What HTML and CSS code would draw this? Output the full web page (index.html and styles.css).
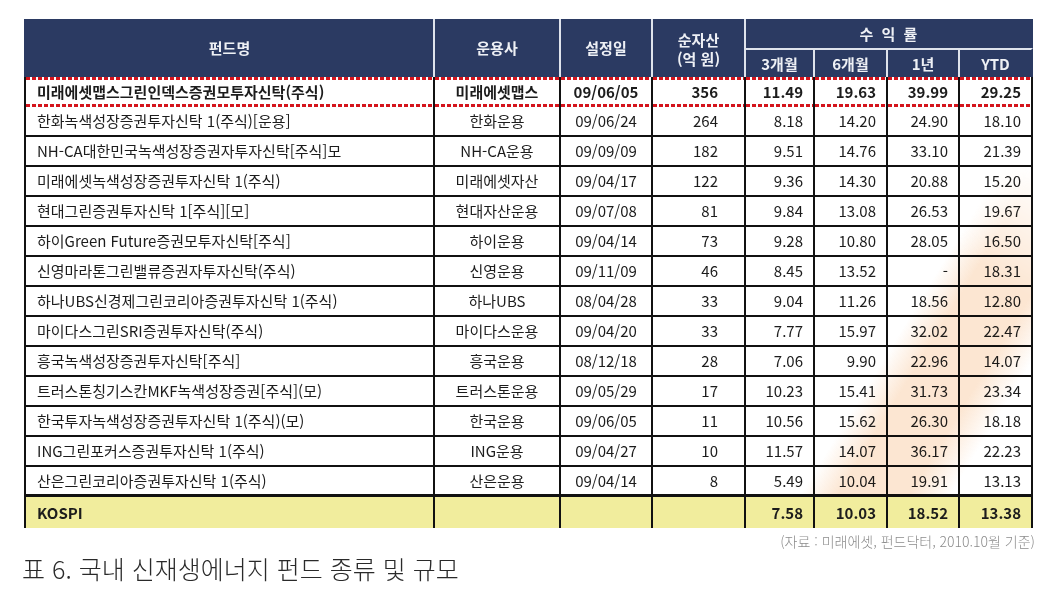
FILE: index.html
```html
<!DOCTYPE html>
<html lang="ko">
<head>
<meta charset="utf-8">
<title>국내 신재생에너지 펀드 종류 및 규모</title>
<link rel="stylesheet" href="styles.css">
</head>
<body>
<div class="page">
  <div class="table-wrap">
    <table class="fund">
      <colgroup>
        <col class="c-name"><col class="c-mgr"><col class="c-date"><col class="c-asset">
        <col class="c-r1"><col class="c-r2"><col class="c-r3"><col class="c-r4">
      </colgroup>
      <thead>
        <tr class="h1">
          <th rowspan="2" class="first">펀드명</th>
          <th rowspan="2">운용사</th>
          <th rowspan="2">설정일</th>
          <th rowspan="2" class="two">순자산<br>(억 원)</th>
          <th colspan="4" class="grp last">수 익 률</th>
        </tr>
        <tr class="h2">
          <th>3개월</th><th>6개월</th><th>1년</th><th class="last">YTD</th>
        </tr>
      </thead>
      <tbody>
        <tr class="hl">
          <td class="name">미래에셋맵스그린인덱스증권모투자신탁(주식)</td><td class="ctr">미래에셋맵스</td><td class="ctr">09/06/05</td><td class="amt">356</td><td class="num">11.49</td><td class="num">19.63</td><td class="num">39.99</td><td class="num">29.25</td>
        </tr>
        <tr>
          <td class="name">한화녹색성장증권투자신탁 1(주식)[운용]</td><td class="ctr">한화운용</td><td class="ctr">09/06/24</td><td class="amt">264</td><td class="num">8.18</td><td class="num">14.20</td><td class="num">24.90</td><td class="num">18.10</td>
        </tr>
        <tr>
          <td class="name">NH-CA대한민국녹색성장증권자투자신탁[주식]모</td><td class="ctr">NH-CA운용</td><td class="ctr">09/09/09</td><td class="amt">182</td><td class="num">9.51</td><td class="num">14.76</td><td class="num">33.10</td><td class="num">21.39</td>
        </tr>
        <tr>
          <td class="name">미래에셋녹색성장증권투자신탁 1(주식)</td><td class="ctr">미래에셋자산</td><td class="ctr">09/04/17</td><td class="amt">122</td><td class="num">9.36</td><td class="num">14.30</td><td class="num">20.88</td><td class="num">15.20</td>
        </tr>
        <tr>
          <td class="name">현대그린증권투자신탁 1[주식][모]</td><td class="ctr">현대자산운용</td><td class="ctr">09/07/08</td><td class="amt">81</td><td class="num">9.84</td><td class="num">13.08</td><td class="num">26.53</td><td class="num">19.67</td>
        </tr>
        <tr>
          <td class="name">하이Green Future증권모투자신탁[주식]</td><td class="ctr">하이운용</td><td class="ctr">09/04/14</td><td class="amt">73</td><td class="num">9.28</td><td class="num">10.80</td><td class="num">28.05</td><td class="num">16.50</td>
        </tr>
        <tr>
          <td class="name">신영마라톤그린밸류증권자투자신탁(주식)</td><td class="ctr">신영운용</td><td class="ctr">09/11/09</td><td class="amt">46</td><td class="num">8.45</td><td class="num">13.52</td><td class="num">-</td><td class="num">18.31</td>
        </tr>
        <tr>
          <td class="name">하나UBS신경제그린코리아증권투자신탁 1(주식)</td><td class="ctr">하나UBS</td><td class="ctr">08/04/28</td><td class="amt">33</td><td class="num">9.04</td><td class="num">11.26</td><td class="num">18.56</td><td class="num">12.80</td>
        </tr>
        <tr>
          <td class="name">마이다스그린SRI증권투자신탁(주식)</td><td class="ctr">마이다스운용</td><td class="ctr">09/04/20</td><td class="amt">33</td><td class="num">7.77</td><td class="num">15.97</td><td class="num">32.02</td><td class="num">22.47</td>
        </tr>
        <tr>
          <td class="name">흥국녹색성장증권투자신탁[주식]</td><td class="ctr">흥국운용</td><td class="ctr">08/12/18</td><td class="amt">28</td><td class="num">7.06</td><td class="num">9.90</td><td class="num">22.96</td><td class="num">14.07</td>
        </tr>
        <tr>
          <td class="name">트러스톤칭기스칸MKF녹색성장증권[주식](모)</td><td class="ctr">트러스톤운용</td><td class="ctr">09/05/29</td><td class="amt">17</td><td class="num">10.23</td><td class="num">15.41</td><td class="num">31.73</td><td class="num">23.34</td>
        </tr>
        <tr>
          <td class="name">한국투자녹색성장증권투자신탁 1(주식)(모)</td><td class="ctr">한국운용</td><td class="ctr">09/06/05</td><td class="amt">11</td><td class="num">10.56</td><td class="num">15.62</td><td class="num">26.30</td><td class="num">18.18</td>
        </tr>
        <tr>
          <td class="name">ING그린포커스증권투자신탁 1(주식)</td><td class="ctr">ING운용</td><td class="ctr">09/04/27</td><td class="amt">10</td><td class="num">11.57</td><td class="num">14.07</td><td class="num">36.17</td><td class="num">22.23</td>
        </tr>
        <tr class="lastrow">
          <td class="name">산은그린코리아증권투자신탁 1(주식)</td><td class="ctr">산은운용</td><td class="ctr">09/04/14</td><td class="amt">8</td><td class="num">5.49</td><td class="num">10.04</td><td class="num">19.91</td><td class="num">13.13</td>
        </tr>
        <tr class="kospi">
          <td class="name">KOSPI</td><td></td><td></td><td></td><td class="num">7.58</td><td class="num">10.03</td><td class="num">18.52</td><td class="num">13.38</td>
        </tr>
      </tbody>
    </table>
    <div class="watermark"><div class="band"></div></div>
  </div>
  <p class="source">(자료 : 미래에셋, 펀드닥터, 2010.10월 기준)</p>
  <h1 class="title">표 6. 국내 신재생에너지 펀드 종류 및 규모</h1>
</div>
</body>
</html>
```

FILE: styles.css
```css
* { box-sizing: border-box; }
html, body {
  margin: 0;
  padding: 0;
  background: #ffffff;
}
body {
  font-family: "Noto Sans CJK KR", "Noto Sans", sans-serif;
  color: #1c1c1c;
}
.page {
  width: 1062px;
  height: 592px;
  padding: 19px 0 0 24px;
}
.table-wrap {
  position: relative;
  width: 1009px;
}
.fund {
  border-collapse: separate;
  border-spacing: 0;
  table-layout: fixed;
  width: 1009px;
  font-size: 15px;
  line-height: 18px;
}
.c-name { width: 411px; }
.c-mgr { width: 126px; }
.c-date { width: 92px; }
.c-asset { width: 93px; }
.c-r1 { width: 69px; }
.c-r2 { width: 73px; }
.c-r3 { width: 72px; }
.c-r4 { width: 73px; }

/* header */
.fund th {
  background: #2b3a62;
  color: #eef0f5;
  font-weight: 700;
  font-size: 15px;
  text-align: center;
  vertical-align: middle;
  padding: 0;
  border-right: 2px solid #dfe3ec;
}
.fund th.last { border-right-color: #2b3a62; }
.fund .h1 th { height: 29px; }
.fund .h2 th {
  height: 29px;
  border-top: 2px solid #dfe3ec;
  padding-top: 1px;
}
.fund th.first { border-left: 2px solid #2b3a62; }
.fund th.two { line-height: 19px; padding-top: 1px; }
.fund th.grp { letter-spacing: 2px; padding-left: 2px; }

/* body */
.fund td {
  height: 30px;
  padding: 0;
  vertical-align: middle;
  white-space: nowrap;
  overflow: hidden;
  background: #ffffff;
  border-right: 2px solid #111111;
  border-bottom: 2px solid #111111;
}
.fund td.name {
  border-left: 2px solid #111111;
  padding-left: 11px;
  text-align: left;
}
.fund td.ctr { text-align: center; }
.fund td.amt { text-align: right; padding-right: 26px; }
.fund td.num { text-align: right; padding-right: 10px; }

.fund tr.hl td {
  font-weight: 700;
  border-bottom: none;
  height: 30px;
  background-color: #ffffff;
  background-image:
    repeating-linear-gradient(90deg, #d4141c 0 4px, transparent 4px 6px),
    repeating-linear-gradient(90deg, #d4141c 0 4px, transparent 4px 6px);
  background-size: 100% 3px, 100% 3px;
  background-position: 0 0, 0 100%;
  background-repeat: no-repeat;
}
.fund tr.lastrow td { border-bottom-width: 3px; }
.fund tr.kospi td {
  background: #f1ed9d;
  font-weight: 700;
  border-bottom: none;
  height: 31px;
}

/* diagonal watermark lying over the right-hand figures */
.watermark {
  position: absolute;
  left: 412px;
  top: 88px;
  width: 597px;
  height: 390px;
  overflow: hidden;
  pointer-events: none;
  mix-blend-mode: multiply;
}
.band {
  position: absolute;
  left: 460px;
  top: 50px;
  width: 128px;
  height: 400px;
  transform: rotate(31.5deg);
  background: linear-gradient(90deg, rgba(252, 230, 210, 0) 0%, rgb(252, 230, 210) 25%, rgb(252, 230, 210) 72%, rgba(252, 230, 210, 0) 100%);
  -webkit-mask-image: linear-gradient(to bottom, transparent 0%, #000 28%, #000 100%);
  mask-image: linear-gradient(to bottom, transparent 0%, #000 28%, #000 100%);
}

.source {
  margin: 4px 0 0 0;
  width: 1011px;
  text-align: right;
  font-size: 14px;
  line-height: 18px;
  font-weight: 300;
  color: #8c8c8c;
}
.title {
  margin: 2px 0 0 -2px;
  font-size: 25px;
  line-height: 32px;
  font-weight: 300;
  color: #2a2a2a;
}
```
